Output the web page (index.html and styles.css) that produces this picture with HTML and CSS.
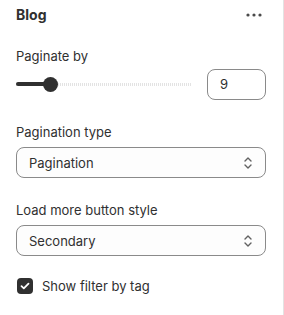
FILE: index.html
```html
<!DOCTYPE html>
<html>
<head>
<meta charset="utf-8">
<link rel="stylesheet" href="styles.css">
</head>
<body>
<div class="panel">
  <div class="header">
    <span class="title">Blog</span>
    <svg class="more" width="16" height="4" viewBox="0 0 16 4"><circle cx="2" cy="2" r="1.6"/><circle cx="8" cy="2" r="1.6"/><circle cx="14" cy="2" r="1.6"/></svg>
  </div>
  <div class="field">
    <div class="label">Paginate by</div>
    <div class="range-row">
      <div class="range">
        <div class="track"></div>
        <div class="fill" style="width:34px"></div>
        <div class="thumb" style="left:34px"></div>
      </div>
      <div class="num">9</div>
    </div>
  </div>
  <div class="field">
    <div class="label">Pagination type</div>
    <div class="select"><span>Pagination</span>
      <svg width="10" height="16" viewBox="0 0 10 16"><path d="M2 6 L5 3 L8 6 M2 10 L5 13 L8 10" fill="none" stroke="#616161" stroke-width="1.4" stroke-linecap="round" stroke-linejoin="round"/></svg>
    </div>
  </div>
  <div class="field">
    <div class="label">Load more button style</div>
    <div class="select"><span>Secondary</span>
      <svg width="10" height="16" viewBox="0 0 10 16"><path d="M2 6 L5 3 L8 6 M2 10 L5 13 L8 10" fill="none" stroke="#616161" stroke-width="1.4" stroke-linecap="round" stroke-linejoin="round"/></svg>
    </div>
  </div>
  <div class="check-row">
    <span class="box"><svg width="10" height="8" viewBox="0 0 10 8"><path d="M1.5 4.2 L3.8 6.3 L8.5 1.6" fill="none" stroke="#fff" stroke-width="1.8" stroke-linecap="round" stroke-linejoin="round"/></svg></span>
    <span class="check-label">Show filter by tag</span>
  </div>
</div>
</body>
</html>
```
FILE: styles.css
```css
html, body { margin: 0; padding: 0; background: #fff; }
body { font-family: Inter, "Noto Sans", sans-serif; color: #303030; }
.panel {
  width: 284px; height: 315px; box-sizing: border-box;
  border-right: 1px solid #e3e3e3;
  padding: 6px 17px 0 16px;
}
.header { display: flex; justify-content: space-between; align-items: center; height: 17px; }
.title { font-size: 14px; font-weight: 700; line-height: 17px; }
.more { fill: #4a4a4a; margin-right: 4px; }
.field { margin-top: 25px; }
.field + .field { margin-top: 24px; }
.label { font-size: 13px; line-height: 16px; }
.range-row { display: flex; align-items: center; margin-top: 5px; }
.range { position: relative; width: 175px; height: 31px; margin-right: 16px; }
.track { position: absolute; left: 0; right: 0; top: 14px; height: 3px;
  background: repeating-linear-gradient(90deg, #e3e3e3 0 1px, #fff 1px 2px); }
.fill { position: absolute; left: 0; top: 13px; height: 4px; border-radius: 2px; background: #303030; }
.thumb { position: absolute; top: 8px; width: 15px; height: 15px; margin-left: -7px; border-radius: 50%; background: #303030; }
.num { width: 59px; height: 31px; box-sizing: border-box; border: 1px solid #8a8a8a; border-radius: 8px;
  font-size: 13px; line-height: 29px; padding-left: 12px; }
.select { display: flex; justify-content: space-between; align-items: center; margin-top: 7px;
  height: 31px; box-sizing: border-box; border: 1px solid #8a8a8a; border-radius: 8px;
  padding: 0 12px 0 12px; font-size: 13px; background: #fdfdfd; }
.check-row { display: flex; align-items: center; margin-top: 22px; padding-left: 1px; }
.box { width: 16px; height: 16px; border-radius: 4px; background: #303030; display: flex; align-items: center; justify-content: center; }
.check-label { font-size: 13px; margin-left: 9px; line-height: 16px; }
```
